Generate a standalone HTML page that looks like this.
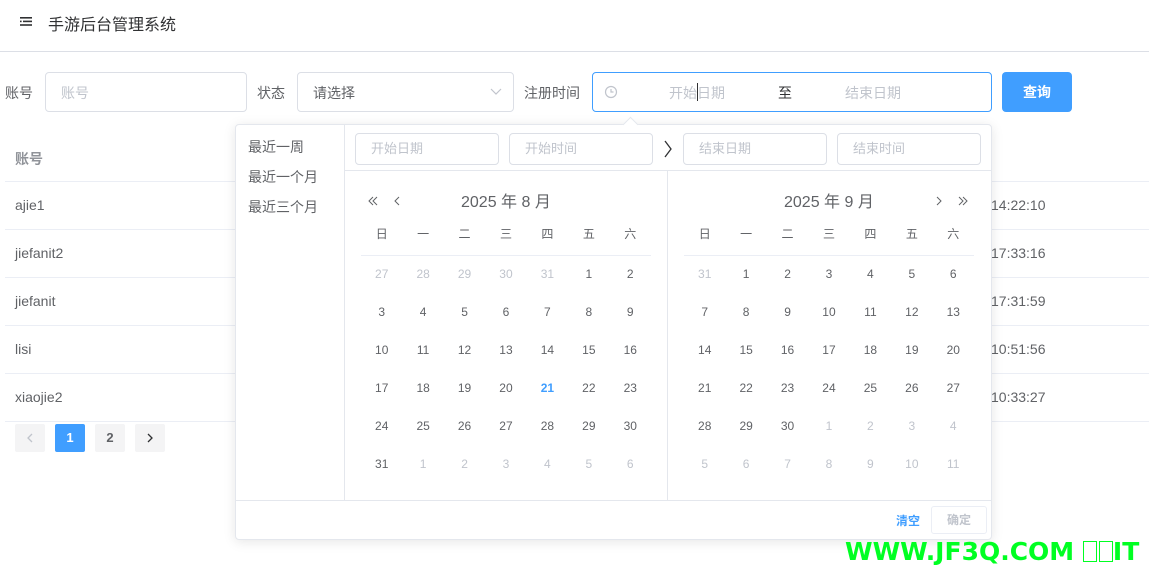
<!DOCTYPE html>
<html><head><meta charset="utf-8"><style>
*{box-sizing:border-box;margin:0;padding:0}
body{width:1149px;height:571px;overflow:hidden;background:#fff;font-family:"Liberation Sans","Noto Sans CJK SC",sans-serif;color:#606266;font-size:14px;position:relative}
.a{position:absolute}
.inp{position:absolute;border:1px solid #dcdfe6;border-radius:4px;height:40px;top:72px}
.ph{color:#c0c4cc}
.row{position:absolute;left:5px;width:1144px;border-bottom:1px solid #ebeef5;height:1px}
.cell{position:absolute;left:15px;font-size:14px;color:#606266}
.tm{position:absolute;left:991px;font-size:14px;color:#606266}
.pg{position:absolute;top:424px;width:30px;height:28px;background:#f4f4f5;border-radius:2px;text-align:center;line-height:28px;font-weight:bold;font-size:13px;color:#606266}
.sin{position:absolute;top:133px;height:32px;border:1px solid #dcdfe6;border-radius:4px;color:#c0c4cc;font-size:13px;line-height:30px;padding-left:15px}
table{position:absolute;border-collapse:collapse;table-layout:fixed}
td{width:41.43px;height:38px;text-align:center;font-size:12px;color:#606266;padding:0}
tr.h td{height:36px;padding-bottom:7px;border-bottom:1px solid #ebeef5;font-size:12px}
td.g{color:#c0c4cc}
td.t{color:#409eff;font-weight:bold}
</style></head><body>
<div class="a" style="left:0;top:0;width:1149px;height:52px;border-bottom:1px solid #dcdfe6"></div>
<svg class="a" style="left:20px;top:17px" width="12" height="9"><rect x="0" y="0" width="12" height="1.6" fill="#303133"/><rect x="3" y="3.6" width="9" height="1.6" fill="#303133"/><rect x="0" y="7.2" width="12" height="1.6" fill="#303133"/><rect x="0" y="3.6" width="1.6" height="1.6" fill="#303133"/></svg>
<div class="a" style="left:48px;top:11px;font-size:16px;color:#303133">手游后台管理系统</div>

<div class="a" style="left:5px;top:83px">账号</div>
<div class="inp" style="left:45px;width:202px"><span class="ph a" style="left:15px;top:10px">账号</span></div>
<div class="a" style="left:257px;top:83px">状态</div>
<div class="inp" style="left:297px;width:217px"><span class="a" style="left:15px;top:10px">请选择</span>
<svg class="a" style="left:192px;top:15px" width="12" height="8"><path d="M1 1L6 6L11 1" fill="none" stroke="#c0c4cc" stroke-width="1.2"/></svg></div>
<div class="a" style="left:524px;top:83px">注册时间</div>
<div class="inp" style="left:592px;width:400px;border-color:#409eff">
<svg class="a" style="left:11px;top:12px" width="14" height="14"><circle cx="7" cy="7" r="5.5" fill="none" stroke="#c0c4cc" stroke-width="1.2"/><path d="M7 4V7H9.5" fill="none" stroke="#c0c4cc" stroke-width="1.2"/></svg>
<span class="ph a" style="left:76px;top:10px">开始日期</span>
<span class="a" style="left:104px;top:10px;width:1px;height:18px;background:#303133"></span>
<span class="a" style="left:185px;top:10px;color:#303133">至</span>
<span class="ph a" style="left:252px;top:10px">结束日期</span></div>
<div class="a" style="left:1002px;top:72px;width:70px;height:40px;background:#409eff;border-radius:4px;color:#fff;font-weight:bold;text-align:center;line-height:40px">查询</div>

<div class="cell" style="top:149px;color:#909399;font-weight:bold">账号</div>
<div class="row" style="top:181px"></div>
<div class="cell" style="top:197px">ajie1</div><div class="tm" style="top:197px">14:22:10</div>
<div class="row" style="top:229px"></div>
<div class="cell" style="top:245px">jiefanit2</div><div class="tm" style="top:245px">17:33:16</div>
<div class="row" style="top:277px"></div>
<div class="cell" style="top:293px">jiefanit</div><div class="tm" style="top:293px">17:31:59</div>
<div class="row" style="top:325px"></div>
<div class="cell" style="top:341px">lisi</div><div class="tm" style="top:341px">10:51:56</div>
<div class="row" style="top:373px"></div>
<div class="cell" style="top:389px">xiaojie2</div><div class="tm" style="top:389px">10:33:27</div>
<div class="row" style="top:421px"></div>
<div class="pg" style="left:15px"><svg class="a" style="left:12px;top:9px" width="6" height="10"><path d="M5 1L1 5L5 9" fill="none" stroke="#c0c4cc" stroke-width="1.3"/></svg></div>
<div class="pg" style="left:55px;background:#409eff;color:#fff">1</div>
<div class="pg" style="left:95px">2</div>
<div class="pg" style="left:135px"><svg class="a" style="left:12px;top:9px" width="6" height="10"><path d="M1 1L5 5L1 9" fill="none" stroke="#303133" stroke-width="1.3"/></svg></div>

<div class="a" style="left:235px;top:124px;width:757px;height:416px;border:1px solid #e4e7ed;border-radius:4px;background:#fff;box-shadow:0 2px 12px rgba(0,0,0,.1)"></div>
<div class="a" style="left:625px;top:119px;width:11px;height:11px;background:#fff;border-left:1px solid #e4e7ed;border-top:1px solid #e4e7ed;transform:rotate(45deg)"></div>
<div class="a" style="left:344px;top:125px;width:1px;height:375px;background:#e4e7ed"></div>
<div class="a" style="left:248px;top:137px;font-size:14px">最近一周</div>
<div class="a" style="left:248px;top:167px;font-size:14px">最近一个月</div>
<div class="a" style="left:248px;top:197px;font-size:14px">最近三个月</div>
<div class="sin" style="left:355px;width:144px">开始日期</div>
<div class="sin" style="left:509px;width:144px">开始时间</div>
<svg class="a" style="left:663px;top:140px" width="10" height="18"><path d="M2 1L8 9L2 17" fill="none" stroke="#303133" stroke-width="1.3"/></svg>
<div class="sin" style="left:683px;width:144px">结束日期</div>
<div class="sin" style="left:837px;width:144px">结束时间</div>
<div class="a" style="left:345px;top:170px;width:646px;height:1px;background:#e4e7ed"></div>
<div class="a" style="left:667px;top:171px;width:1px;height:329px;background:#e4e7ed"></div>
<div class="a" style="left:236px;top:500px;width:755px;height:1px;background:#e4e7ed"></div>

<svg class="a" style="left:368px;top:196px" width="10" height="10"><path d="M5 1L1 5L5 9M9 1L5 5L9 9" fill="none" stroke="#606266" stroke-width="1"/></svg>
<svg class="a" style="left:394px;top:196px" width="6" height="10"><path d="M5 1L1 5L5 9" fill="none" stroke="#606266" stroke-width="1"/></svg>
<div class="a" style="left:461px;top:188px;font-size:16px">2025 年 8 月</div>
<div class="a" style="left:784px;top:188px;font-size:16px">2025 年 9 月</div>
<svg class="a" style="left:936px;top:196px" width="6" height="10"><path d="M1 1L5 5L1 9" fill="none" stroke="#606266" stroke-width="1"/></svg>
<svg class="a" style="left:958px;top:196px" width="10" height="10"><path d="M1 1L5 5L1 9M5 1L9 5L5 9" fill="none" stroke="#606266" stroke-width="1"/></svg>

<table style="left:361px;top:219px"><tr class="h"><td>日</td><td>一</td><td>二</td><td>三</td><td>四</td><td>五</td><td>六</td></tr>
<tr><td class="g">27</td><td class="g">28</td><td class="g">29</td><td class="g">30</td><td class="g">31</td><td>1</td><td>2</td></tr>
<tr><td>3</td><td>4</td><td>5</td><td>6</td><td>7</td><td>8</td><td>9</td></tr>
<tr><td>10</td><td>11</td><td>12</td><td>13</td><td>14</td><td>15</td><td>16</td></tr>
<tr><td>17</td><td>18</td><td>19</td><td>20</td><td class="t">21</td><td>22</td><td>23</td></tr>
<tr><td>24</td><td>25</td><td>26</td><td>27</td><td>28</td><td>29</td><td>30</td></tr>
<tr><td>31</td><td class="g">1</td><td class="g">2</td><td class="g">3</td><td class="g">4</td><td class="g">5</td><td class="g">6</td></tr></table>
<table style="left:684px;top:219px"><tr class="h"><td>日</td><td>一</td><td>二</td><td>三</td><td>四</td><td>五</td><td>六</td></tr>
<tr><td class="g">31</td><td>1</td><td>2</td><td>3</td><td>4</td><td>5</td><td>6</td></tr>
<tr><td>7</td><td>8</td><td>9</td><td>10</td><td>11</td><td>12</td><td>13</td></tr>
<tr><td>14</td><td>15</td><td>16</td><td>17</td><td>18</td><td>19</td><td>20</td></tr>
<tr><td>21</td><td>22</td><td>23</td><td>24</td><td>25</td><td>26</td><td>27</td></tr>
<tr><td>28</td><td>29</td><td>30</td><td class="g">1</td><td class="g">2</td><td class="g">3</td><td class="g">4</td></tr>
<tr><td class="g">5</td><td class="g">6</td><td class="g">7</td><td class="g">8</td><td class="g">9</td><td class="g">10</td><td class="g">11</td></tr></table>

<div class="a" style="left:896px;top:512px;font-size:12px;color:#409eff;font-weight:bold">清空</div>
<div class="a" style="left:931px;top:506px;width:56px;height:28px;border:1px solid #ebeef5;border-radius:3px;font-size:12px;color:#c0c4cc;text-align:center;line-height:26px;font-weight:bold">确定</div>

<div class="a" style="left:845px;top:538px;font-family:'DejaVu Sans',sans-serif;font-weight:bold;font-size:25px;line-height:28px;color:#00ff22;white-space:nowrap">WWW.JF3Q.COM <span style="display:inline-block;width:14px;height:21px;border:1.5px solid #00ff22;vertical-align:-2px"></span><span style="display:inline-block;width:14px;height:21px;border:1.5px solid #00ff22;vertical-align:-2px;margin-left:2px"></span>IT</div>
</body></html>
